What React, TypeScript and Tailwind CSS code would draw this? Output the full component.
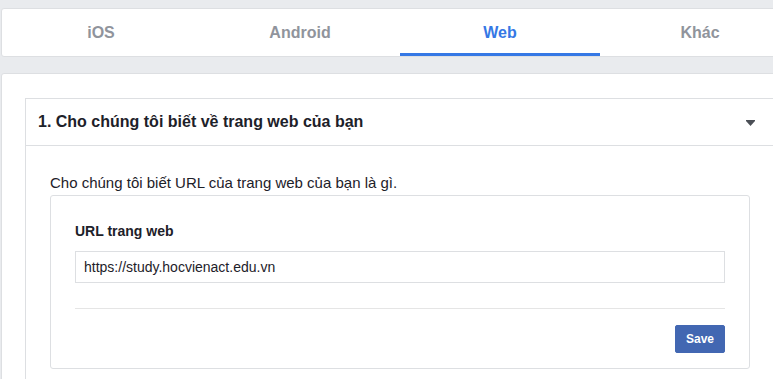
export default function App() {
  const tabs = ["iOS", "Android", "Web", "Khác"];
  const active = "Web";

  return (
    <div
      className="min-h-screen w-[773px] overflow-hidden bg-[#e9ebee] pt-2"
      style={{ fontFamily: "'Liberation Sans', Arial, Helvetica, sans-serif" }}
    >
      {/* platform tabs */}
      <div className="ml-px flex w-[820px] rounded-l-[3px] border border-[#dddfe2] bg-white">
        {tabs.map((t, i) => (
          <div
            key={t}
            className={`relative flex h-[47px] items-center justify-center text-base font-bold ${
              i === 0 ? "w-[198px]" : "w-[200px]"
            } ${t === active ? "text-[#3578e5]" : "text-[#90949c]"}`}
          >
            {t}
            {t === active && (
              <div className="absolute bottom-0 left-0 right-0 h-[3px] bg-[#3578e5]" />
            )}
          </div>
        ))}
      </div>

      {/* settings card */}
      <div className="ml-px mt-4 w-[820px] rounded-l-[3px] border border-[#dddfe2] bg-white pl-[23px] pt-6">
        <div className="w-[750px] border border-[#dddfe2]">
          <div className="flex h-[47px] items-center justify-between border-b border-[#dddfe2] pl-3 pr-[19px]">
            <span className="text-base font-bold text-[#1d2129]">
              1. Cho chúng tôi biết về trang web của bạn
            </span>
            <svg width="9" height="6" viewBox="0 0 9 6" className="mt-px">
              <path d="M0 0H9V1L4.5 6L0 1Z" fill="#4b4f56" />
            </svg>
          </div>

          <div className="px-6 pt-7 pb-3">
            <p className="text-[15px] leading-[18px] text-[#1d2129]">
              Cho chúng tôi biết URL của trang web của bạn là gì.
            </p>
            <div className="mt-[3px] rounded-[3px] border border-[#dddfe2] px-6 pt-[26px] pb-[15px]">
              <label className="block text-sm font-bold leading-[18px] text-[#1d2129]">
                URL trang web
              </label>
              <input
                readOnly
                value="https://study.hocvienact.edu.vn"
                className="mt-[11px] block h-8 w-full border border-[#dddfe2] px-2 text-sm text-[#1d2129] outline-none"
                style={{ fontFamily: "'Liberation Sans', Arial, sans-serif" }}
              />
              <div className="mt-[25px] border-t border-[#e5e5e5]" />
              <div className="mt-4 flex justify-end">
                <button className="h-7 w-[50px] rounded-[2px] border border-[#4267b2] bg-[#4267b2] text-xs font-bold text-white">
                  Save
                </button>
              </div>
            </div>
          </div>
        </div>
      </div>
    </div>
  );
}
